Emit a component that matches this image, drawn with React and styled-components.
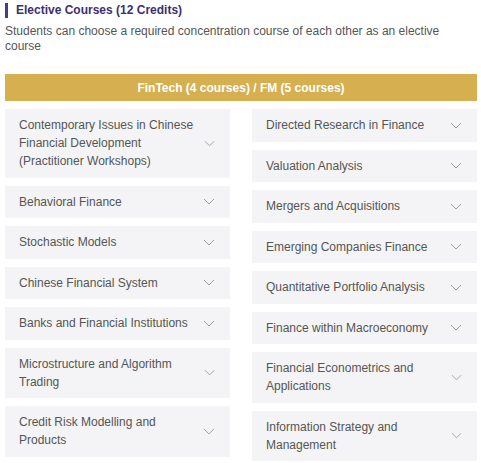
import React from 'react'
import styled, { createGlobalStyle } from 'styled-components'

const Gold = '#d5af50';
const Purple = '#3d2f72';
const CardBg = '#f4f4f6';

const Global = createGlobalStyle`
body{
margin:0;
background:#fff;
font-family:'Liberation Sans', Arial, sans-serif;
}
`
const Pagina = styled.div`
width:481px;
box-sizing:border-box;
padding:0 4px 0 5px;
overflow:hidden;
`
const Titulo = styled.h3`
margin:0;
display:flex;
align-items:center;
gap:8px;
height:20px;
font-size:12px;
font-weight:bold;
color:${Purple};
&::before{
content:'';
display:block;
width:3px;
height:15px;
background:#4a3a8e;
}
`
const Descripcion = styled.p`
margin:4px 0 0 0;
font-size:12px;
line-height:15px;
color:#555;
`
const Grupo = styled.div`
margin-top:20px;
height:27px;
display:flex;
align-items:center;
justify-content:center;
background:${Gold};
color:#fff;
font-size:12px;
font-weight:bold;
`
const Columnas = styled.div`
margin-top:8px;
display:grid;
grid-template-columns:225px 1fr;
column-gap:22px;
align-items:start;
`
const Columna = styled.div`
display:flex;
flex-direction:column;
gap:8px;
`
const Tarjeta = styled.div`
background:${CardBg};
display:flex;
align-items:center;
justify-content:space-between;
padding:7.25px 15px 7.25px 14px;
`
const Nombre = styled.span`
font-size:12px;
line-height:18px;
color:#555;
max-width:185px;
`
const Flecha = () => (
  <svg width="12" height="7" viewBox="0 0 12 7">
    <polyline points="1,1 6,6 11,1" fill="none" stroke="#a0a0a0" strokeWidth="1" />
  </svg>
)

const izquierda = [
  'Contemporary Issues in Chinese Financial Development (Practitioner Workshops)',
  'Behavioral Finance',
  'Stochastic Models',
  'Chinese Financial System',
  'Banks and Financial Institutions',
  'Microstructure and Algorithm Trading',
  'Credit Risk Modelling and Products',
];
const derecha = [
  'Directed Research in Finance',
  'Valuation Analysis',
  'Mergers and Acquisitions',
  'Emerging Companies Finance',
  'Quantitative Portfolio Analysis',
  'Finance within Macroeconomy',
  'Financial Econometrics and Applications',
  'Information Strategy and Management',
];

const Curso = ({nombre}) => (
  <Tarjeta>
    <Nombre>{nombre}</Nombre>
    <Flecha />
  </Tarjeta>
)

export default function App() {
  return (
    <Pagina>
      <Global />
      <Titulo>Elective Courses (12 Credits)</Titulo>
      <Descripcion>
        Students can choose a required concentration course of each other as an elective course
      </Descripcion>
      <Grupo>FinTech (4 courses) / FM (5 courses)</Grupo>
      <Columnas>
        <Columna>
          {izquierda.map(n => <Curso key={n} nombre={n} />)}
        </Columna>
        <Columna>
          {derecha.map(n => <Curso key={n} nombre={n} />)}
        </Columna>
      </Columnas>
    </Pagina>
  )
}
